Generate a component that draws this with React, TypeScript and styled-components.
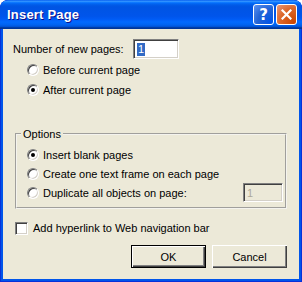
import styled, { createGlobalStyle } from "styled-components";

const GlobalStyle = createGlobalStyle`
  html, body {
    margin: 0;
    padding: 0;
    background: #ffffff;
  }
  body {
    font-family: "Liberation Sans", Arial, sans-serif;
    font-size: 11px;
    color: #000;
  }
`;

const Window = styled.div`
  width: 302px;
  height: 282px;
  box-sizing: border-box;
  display: flex;
  flex-direction: column;
  background: #0055ea;
  border-radius: 8px 8px 0 0;
  overflow: hidden;
  padding: 0 3px 3px 3px;
  box-shadow: inset 0 0 0 1px #0831d9;
`;

const TitleBar = styled.div`
  height: 29px;
  flex-shrink: 0;
  margin: 0 -3px;
  display: flex;
  align-items: center;
  padding: 0 5px 0 7px;
  background: linear-gradient(
    to bottom,
    #0058ee 0%,
    #3593ff 4%,
    #288eff 6%,
    #127dff 8%,
    #036ffc 10%,
    #0262ee 14%,
    #0057e5 20%,
    #0054e3 24%,
    #0055eb 56%,
    #005bf5 66%,
    #026afe 76%,
    #0062ef 86%,
    #0052d6 92%,
    #0040ab 94%,
    #003092 100%
  );
  border-radius: 8px 8px 0 0;
`;

const Title = styled.span`
  flex: 1;
  color: #fff;
  font-weight: bold;
  font-size: 13px;
  letter-spacing: 0.2px;
  text-shadow: 1px 1px #0f1089;
`;

const CaptionButton = styled.div<{ $kind: "help" | "close" }>`
  width: 21px;
  height: 21px;
  box-sizing: border-box;
  margin-left: 2px;
  border: 1px solid #fff;
  border-radius: 3px;
  display: flex;
  align-items: center;
  justify-content: center;
  color: #fff;
  font-family: "DejaVu Sans", sans-serif;
  font-weight: bold;
  font-size: 15px;
  background: ${(p) =>
    p.$kind === "close"
      ? "radial-gradient(circle at 90% 90%, #cc4600 0%, #dc6527 55%, #e8987a 100%)"
      : "radial-gradient(circle at 90% 90%, #0054e9 0%, #2263d5 55%, #5e93f2 100%)"};
`;

const Body = styled.div`
  flex: 1;
  background: #ece9d8;
  display: flex;
  flex-direction: column;
  padding: 10px 12px 0 10px;
`;

const PagesRow = styled.div`
  display: flex;
  align-items: center;
  height: 20px;
`;

const Label = styled.span`
  width: 120px;
`;

const TextBox = styled.div<{ $disabled?: boolean; $w: number; $h: number }>`
  width: ${(p) => p.$w}px;
  height: ${(p) => p.$h}px;
  box-sizing: border-box;
  border: 1px solid;
  border-color: #808080 #ffffff #ffffff #808080;
  box-shadow: inset 1px 1px #404040, inset -1px -1px #d4d0c8;
  background: ${(p) => (p.$disabled ? "#ece9d8" : "#ffffff")};
  color: ${(p) => (p.$disabled ? "#aca899" : "#000")};
  display: flex;
  align-items: center;
  padding-left: 3px;
  margin-left: ${(p) => (p.$disabled ? "auto" : "0")};
`;

const Selected = styled.span`
  background: #316ac5;
  color: #fff;
  line-height: 13px;
  padding: 0 1px;
`;

const OptionRow = styled.label<{ $h: number }>`
  display: flex;
  align-items: center;
  gap: 4px;
  height: ${(p) => p.$h}px;
  padding-left: 14px;
`;

const Radio = styled.span<{ $checked?: boolean }>`
  position: relative;
  width: 12px;
  height: 12px;
  box-sizing: border-box;
  border-radius: 50%;
  border: 1px solid;
  border-color: #808080 #ffffff #ffffff #808080;
  box-shadow: inset 1px 1px #404040, inset -1px -1px #d4d0c8;
  background: #fff;
  flex-shrink: 0;

  &::after {
    content: "";
    display: ${(p) => (p.$checked ? "block" : "none")};
    position: absolute;
    left: 3px;
    top: 3px;
    width: 4px;
    height: 4px;
    border-radius: 50%;
    background: #000;
  }
`;

const Group = styled.fieldset`
  margin: 27px 0 0 2px;
  padding: 4px 2px 5px 4px;
  border: 2px groove #f4f3ee;
  min-width: 0;
  display: flex;
  flex-direction: column;
`;

const Legend = styled.legend`
  padding: 0 2px;
  line-height: 14px;
`;

const GroupRow = styled(OptionRow)`
  padding-left: 6px;
`;

const CheckRow = styled.label`
  display: flex;
  align-items: center;
  gap: 5px;
  height: 20px;
  margin-top: 9px;
  padding-left: 2px;
`;

const CheckBox = styled.span`
  width: 13px;
  height: 13px;
  box-sizing: border-box;
  border: 1px solid;
  border-color: #808080 #ffffff #ffffff #808080;
  box-shadow: inset 1px 1px #404040, inset -1px -1px #d4d0c8;
  background: #fff;
`;

const ButtonRow = styled.div`
  display: flex;
  justify-content: flex-end;
  gap: 6px;
  margin-top: 7px;
`;

const Button = styled.button<{ $default?: boolean }>`
  width: 75px;
  height: 23px;
  box-sizing: border-box;
  font-family: inherit;
  font-size: 11px;
  color: #000;
  background: #ece9d8;
  border: ${(p) => (p.$default ? "1px solid #000" : "none")};
  box-shadow: ${(p) =>
    p.$default
      ? "inset 1px 1px #ffffff, inset -1px -1px #404040, inset -2px -2px #808080"
      : "inset 1px 1px #ffffff, inset -1px -1px #404040, inset -2px -2px #808080"};
  padding: 0;
`;

const CloseIcon = () => (
  <svg width="11" height="11" viewBox="0 0 11 11">
    <path d="M1.5 1.5 L9.5 9.5 M9.5 1.5 L1.5 9.5" stroke="#fff" strokeWidth="2.2" strokeLinecap="square" />
  </svg>
);

export default function App() {
  return (
    <>
      <GlobalStyle />
      <Window>
        <TitleBar>
          <Title>Insert Page</Title>
          <CaptionButton $kind="help">?</CaptionButton>
          <CaptionButton $kind="close">
            <CloseIcon />
          </CaptionButton>
        </TitleBar>
        <Body>
          <PagesRow>
            <Label>Number of new pages:</Label>
            <TextBox $w={46} $h={20}>
              <Selected>1</Selected>
            </TextBox>
          </PagesRow>
          <OptionRow $h={20} style={{ marginTop: 1 }}>
            <Radio />
            Before current page
          </OptionRow>
          <OptionRow $h={20}>
            <Radio $checked />
            After current page
          </OptionRow>

          <Group>
            <Legend>Options</Legend>
            <GroupRow $h={19}>
              <Radio $checked />
              Insert blank pages
            </GroupRow>
            <GroupRow $h={19}>
              <Radio />
              Create one text frame on each page
            </GroupRow>
            <GroupRow $h={19}>
              <Radio />
              Duplicate all objects on page:
              <TextBox $disabled $w={40} $h={19}>
                1
              </TextBox>
            </GroupRow>
          </Group>

          <CheckRow>
            <CheckBox />
            Add hyperlink to Web navigation bar
          </CheckRow>

          <ButtonRow>
            <Button $default>OK</Button>
            <Button>Cancel</Button>
          </ButtonRow>
        </Body>
      </Window>
    </>
  );
}
